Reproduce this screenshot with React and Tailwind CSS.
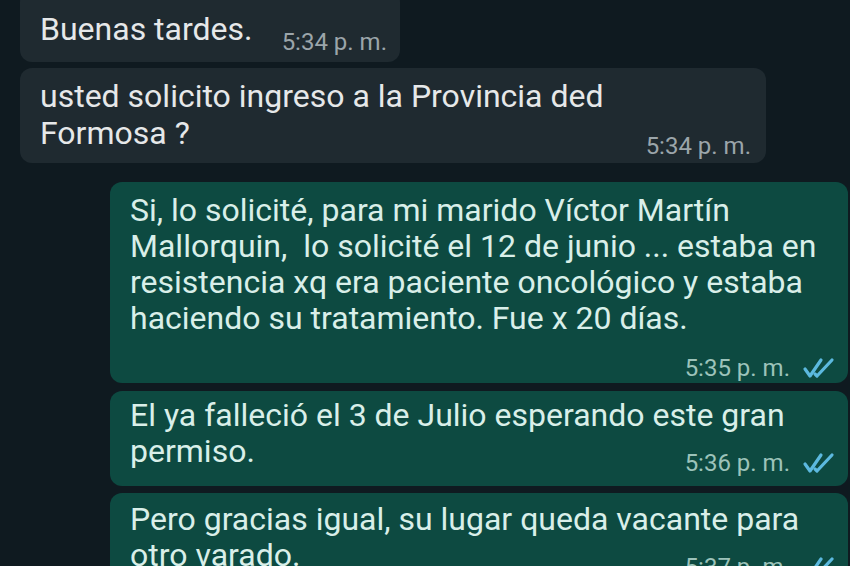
import React from "react";

function Checks() {
  return (
    <svg width="36" height="22" viewBox="0 0 36 22" className="ml-[10px] shrink-0">
      <path d="M5 12 L10 19 L21 3" fill="none" stroke="#5cb9df" strokeWidth="3.2" strokeLinecap="round" strokeLinejoin="round" />
      <path d="M15 17 L17 19 L32 3" fill="none" stroke="#5cb9df" strokeWidth="3.2" strokeLinecap="round" strokeLinejoin="round" />
    </svg>
  );
}

export default function App() {
  const font = { fontFamily: "Roboto, 'Noto Sans', sans-serif" };
  return (
    <div className="w-[850px] h-[566px] overflow-hidden bg-[#0f1a20] flex flex-col" style={font}>
      {/* Bubble 1 */}
      <div className="ml-[20px] -mt-[10px] w-[380px] rounded-[12px] bg-[#1f2a30] pl-[20px] pr-[13px] pt-[21px] pb-[14px] flex items-end">
        <span className="text-[32px] leading-[37px] text-[#e6e8e9] whitespace-nowrap">Buenas tardes.</span>
        <span className="ml-auto text-[24px] leading-[28px] text-[#9ba5aa] whitespace-nowrap translate-y-[8px]">5:34 p. m.</span>
      </div>

      {/* Bubble 2 */}
      <div className="ml-[20px] mt-[6px] w-[746px] rounded-[12px] bg-[#1f2a30] pl-[20px] pr-[15px] pt-[10px] pb-[3px] flex flex-col">
        <div className="text-[32px] leading-[37px] text-[#e6e8e9] whitespace-nowrap">
          usted solicito ingreso a la Provincia ded
          <br />
          Formosa ?
        </div>
        <div className="-mt-[20px] self-end text-[24px] leading-[28px] text-[#9ba5aa] whitespace-nowrap">5:34 p. m.</div>
      </div>

      {/* Bubble 3 */}
      <div className="ml-[110px] mt-[19px] w-[738px] rounded-[12px] bg-[#0d4a41] pl-[20px] pr-[12px] pt-[10px] pb-[1px] flex flex-col">
        <div className="text-[32px] leading-[36px] text-[#d9efe9] whitespace-nowrap">
          Si, lo solicité, para mi marido Víctor Martín
          <br />
          Mallorquin,&nbsp; lo solicité el 12 de junio ... estaba en
          <br />
          resistencia xq era paciente oncológico y estaba
          <br />
          haciendo su tratamiento. Fue x 20 días.
        </div>
        <div className="mt-[18px] self-end flex items-center">
          <span className="text-[24px] leading-[28px] text-[#9cc3ba] whitespace-nowrap">5:35 p. m.</span>
          <Checks />
        </div>
      </div>

      {/* Bubble 4 */}
      <div className="ml-[110px] mt-[8px] w-[738px] rounded-[12px] bg-[#0d4a41] pl-[20px] pr-[12px] pt-[6px] pb-[9px] flex flex-col">
        <div className="text-[32px] leading-[36px] text-[#d9efe9] whitespace-nowrap">
          El ya falleció el 3 de Julio esperando este gran
          <br />
          permiso.
        </div>
        <div className="-mt-[20px] self-end flex items-center">
          <span className="text-[24px] leading-[28px] text-[#9cc3ba] whitespace-nowrap">5:36 p. m.</span>
          <Checks />
        </div>
      </div>

      {/* Bubble 5 */}
      <div className="ml-[110px] mt-[7px] w-[738px] rounded-[12px] bg-[#0d4a41] pl-[20px] pr-[12px] pt-[8px] pb-[8px] flex flex-col shrink-0">
        <div className="text-[32px] leading-[36px] text-[#d9efe9] whitespace-nowrap">
          Pero gracias igual, su lugar queda vacante para
          <br />
          otro varado.
        </div>
        <div className="-mt-[20px] self-end flex items-center">
          <span className="text-[24px] leading-[28px] text-[#9cc3ba] whitespace-nowrap">5:37 p. m.</span>
          <Checks />
        </div>
      </div>
    </div>
  );
}
